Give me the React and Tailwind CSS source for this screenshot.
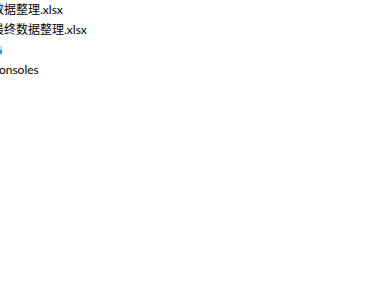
export default function App() {
  return (
    <div className="w-[384px] h-[288px] bg-white overflow-hidden">
      <div
        className="flex flex-col text-[12px] leading-[20px] text-black"
        style={{ fontFamily: 'Lato, "Noto Sans CJK SC", sans-serif' }}
      >
        <div className="h-[20px] whitespace-nowrap ml-[-8px]">数据整理.xlsx</div>
        <div className="h-[20px] whitespace-nowrap ml-[-8px]">最终数据整理.xlsx</div>
        <div className="h-[20px] flex items-center">
          <div className="flex flex-col">
            <div className="w-[2px] h-[4px] bg-[#9fe3ff]" />
            <div className="w-[2px] h-[4px] bg-[#3c8dff]" />
          </div>
        </div>
        <div className="h-[20px] whitespace-nowrap ml-[-9px]">Consoles</div>
      </div>
    </div>
  );
}
